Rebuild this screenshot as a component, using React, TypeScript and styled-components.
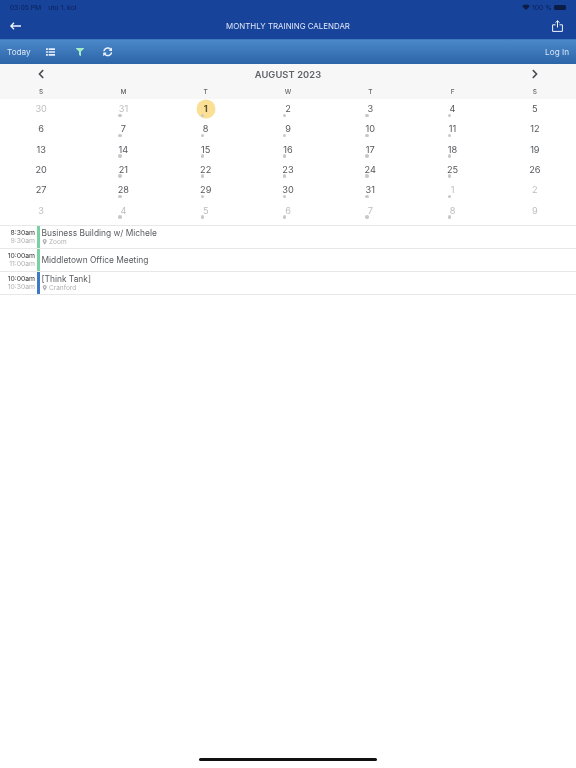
import React from "react";
import styled, { createGlobalStyle } from "styled-components";
import { FaFilter, FaSyncAlt, FaChevronLeft, FaChevronRight, FaMapMarkerAlt } from "react-icons/fa";

const Global = createGlobalStyle`
  html, body { margin: 0; padding: 0; background: #fff; }
  * { box-sizing: border-box; }
  body { font-family: "Inter", "Noto Sans", sans-serif; }
`;

const Page = styled.div`
  width: 576px; height: 768px; display: flex; flex-direction: column; overflow: hidden; will-change: transform;
`;
const TopBlock = styled.div`
  height: 39px; background: #17439b; display: flex; flex-direction: column;
`;
const StatusBar = styled.div`
  height: 14px; padding: 0 10px; display: flex; align-items: center; justify-content: space-between;
  font-size: 6.8px; color: #0b2055;
`;
const StatusGroup = styled.div`
  display: flex; align-items: center; gap: 7px;
`;
const StatusRight = styled.div`
  display: flex; align-items: center; gap: 2px;
`;
const Battery = styled.div`
  width: 12px; height: 5px; background: #0c1c44; border-radius: 1.5px;
`;
const NavBar = styled.div`
  flex: 1; display: flex; align-items: center; justify-content: space-between; padding: 0 13px 2px 10px;
`;
const NavTitle = styled.div`
  font-size: 7.9px; color: #dfe8f7; margin-left: 3px;
`;
const Toolbar = styled.div`
  height: 25px; background: linear-gradient(#4a88c9, #2c65a8); border-top: 1px solid #3f79bd;
  display: flex; align-items: center; padding: 0 7px; color: #dbe7f5; font-size: 8.2px;
`;
const ToolLabel = styled.span<{ $mr?: number }>`
  margin-right: ${(p) => p.$mr ?? 0}px;
`;
const ToolIcon = styled.span<{ $w: number; $c?: string }>`
  width: ${(p) => p.$w}px; display: flex; color: ${(p) => p.$c ?? "#e6eef9"};
`;
const Spacer = styled.div`flex: 1;`;
const MonthHead = styled.div`
  height: 35px; background: #f7f7f7; display: flex; flex-direction: column;
`;
const MonthRow = styled.div`
  height: 20px; display: grid; grid-template-columns: repeat(7, 1fr); align-items: center;
`;
const MonthTitle = styled.div`
  grid-column: 2 / 7; text-align: center; font-size: 9.3px; font-weight: 600; color: #5f6368; letter-spacing: 0.1px;
`;
const Arrow = styled.div`
  display: flex; justify-content: center; color: #4a4d52;
`;
const Grid7 = styled.div`
  display: grid; grid-template-columns: repeat(7, 1fr); padding-top: 1px;
`;
const DayName = styled.div`
  text-align: center; font-size: 6.5px; font-weight: 500; color: #666; line-height: 14px;
`;
const Weeks = styled(Grid7)`
  grid-auto-rows: 20.33px; height: 126px; padding-top: 0;
`;
const Cell = styled.div`
  position: relative; display: flex; align-items: center; justify-content: center; padding-bottom: 1px;
`;
const Today = styled.div`
  position: absolute; width: 19px; height: 19px; border-radius: 50%; background: #fbdf95; left: 50%; top: 50%;
  transform: translate(-50%, -50%);
`;
const Num = styled.span<{ $muted?: boolean; $today?: boolean }>`
  position: relative; font-size: 9.2px;
  font-weight: ${(p) => (p.$today ? 700 : 400)};
  color: ${(p) => (p.$today ? "#5c4f2c" : p.$muted ? "#bdbdbd" : "#55585c")};
`;
const Dot = styled.span`
  position: absolute; width: 3.5px; height: 3.5px; border-radius: 50%; background: #c8c8c8; left: 50%; margin-left: -5px; top: 14.5px;
`;
const EventList = styled.div`
  border-top: 1px solid #e8e8e8;
`;
const EventRow = styled.div`
  height: 23px; display: flex; border-bottom: 1px solid #e8e8e8;
`;
const Times = styled.div`
  width: 37px; padding-right: 2px; display: flex; flex-direction: column; justify-content: center; align-items: flex-end;
  font-size: 6.8px; line-height: 8.5px;
`;
const TimeStart = styled.div`color: #333;`;
const TimeEnd = styled.div`color: #b0b0b0;`;
const Bar = styled.div<{ $c: string }>`
  width: 2.5px; background: ${(p) => p.$c};
`;
const Body = styled.div`
  padding-left: 2px; display: flex; flex-direction: column; justify-content: center;
`;
const Title = styled.div`
  font-size: 8.4px; line-height: 10px; color: #595c60;
`;
const Loc = styled.div`
  font-size: 6.5px; line-height: 9px; color: #b0b0b0; display: flex; align-items: center; gap: 2px;
`;
const Fill = styled.div`flex: 1;`;
const HomeRow = styled.div`
  height: 10px; display: flex; justify-content: center;
`;
const Home = styled.div`
  width: 178px; height: 3px; border-radius: 2px; background: #111;
`;

const names = ["S", "M", "T", "W", "T", "F", "S"];
const seq: [number, boolean][] = [
  [30, true], [31, true],
  ...Array.from({ length: 31 }, (_, i) => [i + 1, false] as [number, boolean]),
  ...Array.from({ length: 9 }, (_, i) => [i + 1, true] as [number, boolean]),
];
const events = [
  { s: "8:30am", e: "9:30am", t: "Business Building w/ Michele", l: "Zoom", c: "#79d0a2" },
  { s: "10:00am", e: "11:00am", t: "Middletown Office Meeting", l: "", c: "#79d0a2" },
  { s: "10:00am", e: "10:30am", t: "[Think Tank]", l: "Cranford", c: "#3f78c4" },
];

export default function App() {
  return (
    <Page>
      <Global />
      <TopBlock>
        <StatusBar>
          <StatusGroup><span>03:05 PM</span><span>uto 1. kol</span></StatusGroup>
          <StatusRight>
            <svg width="8" height="6" viewBox="0 0 16 12" fill="#0c1c44"><path d="M8 12 0 4a11.5 11.5 0 0 1 16 0z" /></svg>
            <span>100 %</span>
            <Battery />
          </StatusRight>
        </StatusBar>
        <NavBar>
          <svg width="11" height="8" viewBox="0 0 11 8" fill="none" stroke="#f1f5fc" strokeWidth="1.3"><path d="M11 4H1M4 .7 .9 4 4 7.3" /></svg>
          <NavTitle>MONTHLY TRAINING CALENDAR</NavTitle>
          <svg width="11" height="12" viewBox="0 0 11 12" fill="none" stroke="#f1f5fc" strokeWidth="1"><path d="M5.5 7.5V.8M3.4 2.8 5.5.8l2.1 2M3.5 4.8H.6v6.6h9.8V4.8H7.5" /></svg>
        </NavBar>
      </TopBlock>
      <Toolbar>
        <ToolLabel $mr={15}>Today</ToolLabel>
        <ToolIcon $w={30}>
          <svg width="9.5" height="8" viewBox="0 0 10 8" fill="currentColor"><path d="M0 0h2v1.8H0zM2.8 0H10v1.8H2.8zM0 3.1h2v1.8H0zM2.8 3.1H10v1.8H2.8zM0 6.2h2V8H0zM2.8 6.2H10V8H2.8z" /></svg>
        </ToolIcon>
        <ToolIcon $w={27} $c="#a5ecc6"><FaFilter size={8} /></ToolIcon>
        <ToolIcon $w={12}><FaSyncAlt size={9.5} /></ToolIcon>
        <Spacer />
        <ToolLabel>Log In</ToolLabel>
      </Toolbar>
      <MonthHead>
        <MonthRow>
          <Arrow><FaChevronLeft size={10} /></Arrow>
          <MonthTitle>AUGUST 2023</MonthTitle>
          <Arrow><FaChevronRight size={10} /></Arrow>
        </MonthRow>
        <Grid7>{names.map((n, i) => <DayName key={i}>{n}</DayName>)}</Grid7>
      </MonthHead>
      <Weeks>
        {seq.map(([d, m], i) => {
          const dot = i % 7 !== 0 && i % 7 !== 6;
          const isToday = d === 1 && !m;
          return (
            <Cell key={i}>
              {isToday && <Today />}
              <Num $muted={m} $today={isToday}>{d}</Num>
              {dot && <Dot />}
            </Cell>
          );
        })}
      </Weeks>
      <EventList>
        {events.map((e) => (
          <EventRow key={e.t}>
            <Times><TimeStart>{e.s}</TimeStart><TimeEnd>{e.e}</TimeEnd></Times>
            <Bar $c={e.c} />
            <Body>
              <Title>{e.t}</Title>
              {e.l && <Loc><FaMapMarkerAlt size={5.5} />{e.l}</Loc>}
            </Body>
          </EventRow>
        ))}
      </EventList>
      <Fill />
      <HomeRow><Home /></HomeRow>
    </Page>
  );
}
